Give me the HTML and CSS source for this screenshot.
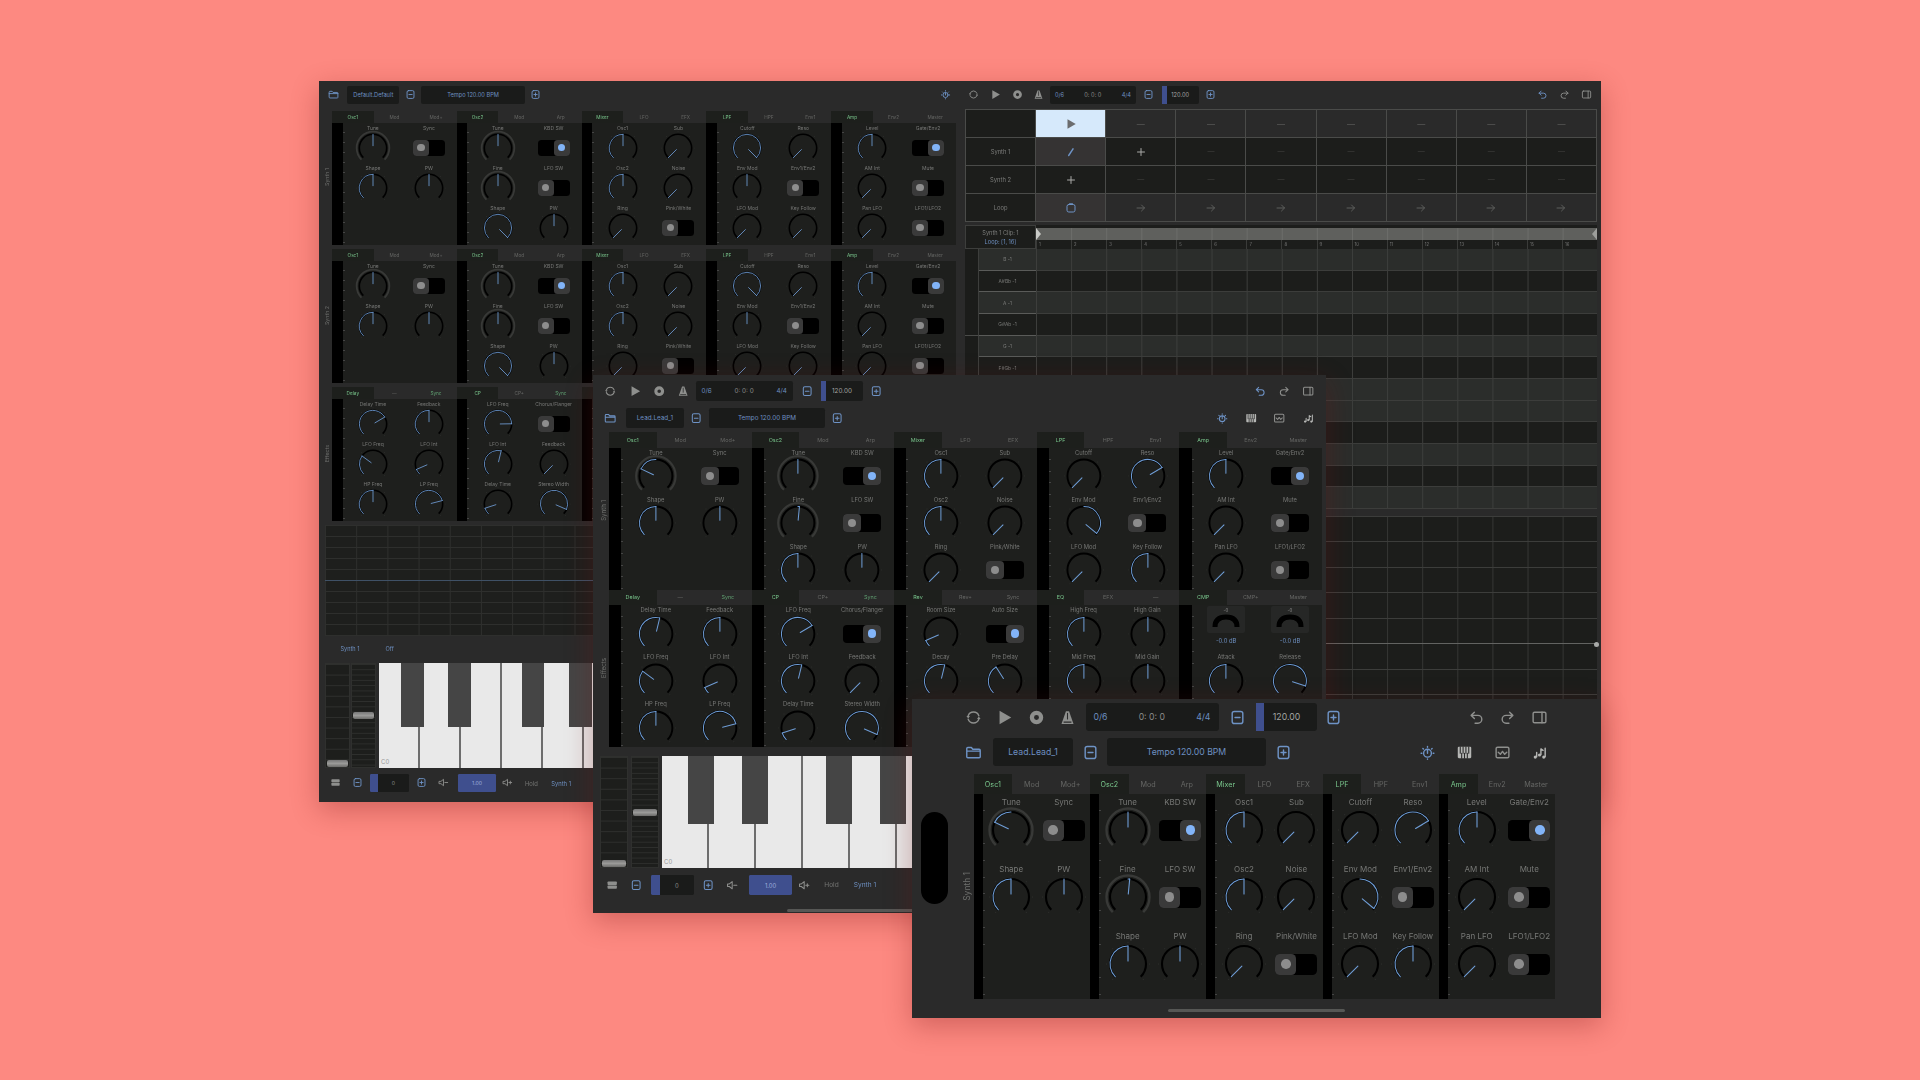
FILE: index.html
```html
<!DOCTYPE html>
<html lang="en">
<head>
<meta charset="utf-8">
<title>Synth windows</title>
<link rel="stylesheet" href="styles.css">
</head>
<body>
<svg class="defs" xmlns="http://www.w3.org/2000/svg">
  <symbol id="i-loop" viewBox="0 0 24 24"><path class="st" d="M4.500 9.500A8 8 0 0 1 19.500 9.500M19.500 14.500A8 8 0 0 1 4.500 14.500"/><path class="fl" d="M2 10h5l-2.500 3.500zM22 14h-5l2.500-3.500z"/></symbol>
  <symbol id="i-play" viewBox="0 0 24 24"><path class="fl" d="M5 2.500 21.500 12 5 21.500z"/></symbol>
  <symbol id="i-rec" viewBox="0 0 24 24"><path class="fl" fill-rule="evenodd" d="M12 2.500a9.500 9.500 0 1 1 0 19 9.500 9.500 0 0 1 0-19zm0 6a3.500 3.500 0 1 0 0 7 3.500 3.500 0 0 0 0-7z"/></symbol>
  <symbol id="i-metro" viewBox="0 0 24 24"><path class="fl" d="M9.800 3h4.400L20.500 21h-17z"/><path class="cut" d="M12 6v8M7 18.500h10"/></symbol>
  <symbol id="i-minus" viewBox="0 0 24 24"><rect class="st" x="4.500" y="3.500" width="15" height="17" rx="3"/><path class="st" d="M8.500 12h7"/></symbol>
  <symbol id="i-plus" viewBox="0 0 24 24"><rect class="st" x="4.500" y="3.500" width="15" height="17" rx="3"/><path class="st" d="M8.500 12h7M12 8.500v7"/></symbol>
  <symbol id="i-folder" viewBox="0 0 24 24"><path class="st" d="M2.500 6.500a1.500 1.500 0 0 1 1.500-1.500h5l2 2.500h9a1.500 1.500 0 0 1 1.500 1.500v9a1.500 1.500 0 0 1-1.500 1.500H4a1.500 1.500 0 0 1-1.500-1.500zM2.500 10h19"/></symbol>
  <symbol id="i-undo" viewBox="0 0 24 24"><path class="st" d="M9 4.500 4.500 9 9 13.500M4.500 9H14a5.500 5.500 0 0 1 0 11h-4"/></symbol>
  <symbol id="i-redo" viewBox="0 0 24 24"><path class="st" d="M15 4.500 19.500 9 15 13.500M19.500 9H10a5.500 5.500 0 0 0 0 11h4"/></symbol>
  <symbol id="i-panel" viewBox="0 0 24 24"><rect class="st" x="3" y="4.500" width="18" height="15" rx="2"/><path class="st" d="M15.500 4.500v15"/></symbol>
  <symbol id="i-synth" viewBox="0 0 24 24"><circle class="st" cx="12" cy="13" r="5.500"/><path class="st" d="M12 8v5M12 3.500v1M12 21v.500M3 13h1M20 13h1M5.500 6.500l.7.700M18.500 6.500l-.7.700"/></symbol>
  <symbol id="i-piano" viewBox="0 0 24 24"><rect class="fl" x="2.500" y="4" width="19" height="16" rx="1.500"/><path class="cut" d="M6 4v9M10 4v9M14 4v9M18 4v9M8 13v7M12 13v7M16 13v7"/></symbol>
  <symbol id="i-wave" viewBox="0 0 24 24"><rect class="st" x="3" y="4.500" width="18" height="15" rx="2"/><path class="st" d="m6 11.500 3 3 3-4 3 4 3-3"/></symbol>
  <symbol id="i-notes" viewBox="0 0 24 24"><path class="st" d="M8 18V12M14 15V7l3 2M20 18V6"/><circle class="fl" cx="6" cy="18.500" r="2.200"/><circle class="fl" cx="12" cy="15.500" r="2.200"/><circle class="fl" cx="18" cy="18.500" r="2.200"/></symbol>
  <symbol id="i-burger" viewBox="0 0 24 24"><rect class="fl" x="3" y="5" width="18" height="6.500" rx="1.500"/><rect class="fl" x="3" y="12.500" width="18" height="6.500" rx="1.500"/></symbol>
  <symbol id="i-voldn" viewBox="0 0 24 24"><path class="st" d="M3 9.500h3.500L12 5v14l-5.500-4.500H3zM15 12h6"/></symbol>
  <symbol id="i-volup" viewBox="0 0 24 24"><path class="st" d="M3 9.500h3.500L12 5v14l-5.500-4.500H3zM15 12h6M18 9v6"/></symbol>
  <symbol id="i-pencil" viewBox="0 0 24 24"><path class="fl" d="M15.500 4 18 5.500 8.500 20 6 20.500l.2-2.600z"/></symbol>
  <symbol id="i-add" viewBox="0 0 24 24"><path class="st" d="M12 5v14M5 12h14"/></symbol>
  <symbol id="i-arrow" viewBox="0 0 24 24"><path class="st" d="M4 12h15M13 6l6 6-6 6"/></symbol>
  <symbol id="i-clip" viewBox="0 0 24 24"><rect class="st" x="4" y="5" width="16" height="15" rx="3.500"/><path class="st" d="M9 3.500h6"/></symbol>
</svg>

<main class="win win-1" id="win1"></main>
<main class="win win-2" id="win2"></main>
<main class="win win-3" id="win3"></main>

<script src="script.js"></script>
</body>
</html>
```
FILE: styles.css
```css
* { box-sizing: border-box; }
html, body { margin: 0; height: 100%; }
body {
  background: #fd8981;
  font-family: Inter, "Liberation Sans", sans-serif;
  overflow: hidden;
  color: #7d7e7c;
}
.defs { width: 0; height: 0; display: block; overflow: hidden; }
.st { fill: none; stroke: currentColor; stroke-width: 2; stroke-linecap: round; stroke-linejoin: round; }
.fl { fill: currentColor; }
.cut { fill: none; stroke: #2a2a2a; stroke-width: 1.500; stroke-linecap: round; }

/* windows on the free canvas */
.win {
  position: absolute;
  background: #2a2a2a;
  overflow: hidden;
  display: flex;
  flex-direction: column;
  box-shadow: 0 8px 26px rgba(120, 20, 20, .32);
  font-size: var(--em);
}
.win-1 {
  left: 318.500px; top: 81px; width: 1282.500px; height: 721px;
  --em: 6.500px; --ic: 21.700px; --cw: 124.800px; --strip: 10.500px; --pitch: 40px; --panel: 122px;
  --tab: 12px; --lab: 10px; --ctl: 30px; --knob: 38px; --lab-f: 5px; --tab-f: 4.700px;
  --tg-w: 32px; --tg-h: 16px; --side: 13.500px; --key: 41px; --st: 25px; --tempo: 5.700em; --trans-gap: 0;
  filter: blur(.6px);
}
.win-2 {
  left: 593px; top: 375px; width: 733px; height: 538px;
  --em: 7.300px; --ic: 24.300px; --cw: 142.600px; --strip: 12.300px; --pitch: 47px; --panel: 142px;
  --tab: 15.500px; --lab: 10px; --ctl: 37px; --knob: 45.800px; --lab-f: 5.800px; --tab-f: 5.400px;
  --tg-w: 38px; --tg-h: 18px; --side: 16px; --key: 47px; --st: 28px; --tempo: 5.750em; --trans-gap: 0;
  filter: blur(.5px);
}
.win-3 {
  left: 911.500px; top: 699px; width: 689.500px; height: 319px;
  --em: 10px; --ic: 31.500px; --cw: 116.400px; --strip: 9px; --pitch: 67px; --panel: 205px;
  --tab: 20px; --lab: 16px; --ctl: 40px; --knob: 50px; --lab-f: 8px; --tab-f: 7.200px;
  --tg-w: 42px; --tg-h: 21px; --side: 62px; --key: 47px; --st: 28px; --tempo: 6.100em; --trans-gap: .200em;
  filter: blur(.35px);
}

/* toolbars */
.row { display: flex; align-items: center; flex: none; }
.win-1 .row-top { height: 27.500px; padding: 0 4px 0 4.500px; }
.win-2 .row-a { height: 32px; padding: 0 5.500px; }
.win-2 .row-b { height: 22px; padding: 0 5.500px; margin-bottom: 3px; }
.win-3 .row-a { height: 36px; padding: 0 46px; }
.win-3 .row-b { height: 34px; padding: 0 46px; margin-bottom: 5px; }
.grow { flex: 1; }
.left-group { display: flex; align-items: center; flex: 0 0 640px; padding-right: 7px; }
.btn { width: var(--ic); display: flex; align-items: center; justify-content: center; flex: none; color: #6e93c6; }
.btn-s { width: 3.400em; }
.btn-v { width: calc(var(--ic) * 1.180); }
.gray { color: #8e8f8d; }
.lite { color: #b6b7b5; }
.ico { width: 1.700em; height: 1.700em; display: block; flex: none; }
.views { display: flex; margin-right: calc(var(--ic) * -.09); }
.field {
  background: #1a1b1a;
  border-radius: .300em;
  height: 2.800em;
  display: flex;
  align-items: center;
  justify-content: center;
  font-size: 1em;
  flex: none;
  white-space: nowrap;
}
.field span { font-size: .870em; }
.blue { color: #6d8fc0; }
.trans { width: 13.300em; margin: 0 .300em 0 var(--trans-gap); justify-content: space-between; padding: 0 .800em 0 .800em; }
.trans .mid { color: #8b8c8a; }
.tempo { width: var(--tempo); border-left: .800em solid #3f4f8e; border-radius: 0 .300em .300em 0; margin: 0 .100em 0 .300em; padding-right: .800em; color: #a4a5a3; }
.preset { width: 8em; margin-left: .400em; }
.display { width: 15.900em; }

/* racks */
.rack { display: flex; flex: none; }
.side { width: var(--side); flex: none; display: flex; align-items: center; justify-content: flex-end; }
.side-label { writing-mode: vertical-rl; transform: rotate(180deg); font-size: calc(var(--lab-f) * 1.060); white-space: nowrap; color: #6f706e; margin-right: 2px; }
.pill { width: 27px; height: 92px; border-radius: 14px; background: #000; align-self: flex-start; margin: 38px auto 0 9px; }
.col { width: var(--cw); flex: none; }
.tabs { height: var(--tab); display: flex; }
.tab { flex: 1; display: flex; align-items: center; justify-content: center; font-size: var(--tab-f); color: #666765; }
.tab.on { background: #1d1f1c; color: #79c68c; }
.tab.green { color: #5f9e70; }
.panel { height: var(--panel); display: flex; background: #1e1f1d; }
.black { width: var(--strip); background: #000; flex: none; }
.ticks {
  width: 2px; flex: none; margin-right: -2px;
  background: repeating-linear-gradient(180deg, transparent 0, transparent calc(var(--pitch) / 4 - 1px), #444 calc(var(--pitch) / 4 - 1px), #444 calc(var(--pitch) / 4));
}
.cells { flex: 1; padding-left: 2.500px; display: grid; grid-template-columns: 1fr 1fr; grid-auto-rows: var(--pitch); align-content: start; }
.cell { display: flex; flex-direction: column; align-items: center; min-width: 0; }
.lab { height: var(--lab); line-height: var(--lab); font-size: var(--lab-f); color: #777876; white-space: nowrap; }
.ctl { height: var(--ctl); display: flex; align-items: center; justify-content: center; }
.knob { width: var(--knob); height: var(--knob); flex: none; display: block; }
.k-track { fill: none; stroke: #000; stroke-width: 2.100; stroke-linecap: butt; }
.k-ring { fill: none; stroke: #383937; stroke-width: 2.400; }
.k-val, .k-ptr { fill: none; stroke: #6f9dd6; stroke-width: 1.100; stroke-linecap: round; }
.k-dot { fill: #3f403e; }

.toggle { width: var(--tg-w); height: var(--tg-h); display: flex; background: #000; border-radius: calc(var(--tg-h) * .22); }
.toggle.is-on { justify-content: flex-end; }
.thumb { width: var(--tg-h); height: var(--tg-h); background: #3a3a3a; border-radius: calc(var(--tg-h) * .22); display: flex; align-items: center; justify-content: center; }
.thumb i { width: 46%; height: 46%; border-radius: 50%; background: #8d8d8d; display: block; }
.is-on .thumb i { background: #82b4f8; }

.comp-wrap { display: flex; flex-direction: column; align-items: center; }
.comp { width: 38px; height: 27px; background: #262726; border-radius: 2px; display: block; margin-top: 1px; }
.comp text { font-size: 4.500px; fill: #8a8a8a; font-family: Inter, sans-serif; }
.comp path { fill: none; stroke: #000; stroke-width: 5; }
.db { font-size: var(--lab-f); color: #6d8fc0; margin-top: 4px; }

/* window 1 body */
.w1-body { display: flex; flex: 1; min-height: 0; }
.w1-left { flex: 0 0 641.500px; min-width: 0; overflow: hidden; padding-top: 2px; display: flex; flex-direction: column; gap: 4px; }
.w1-right { flex: 0 0 632px; min-width: 0; margin-left: 5px; padding-top: .500px; display: flex; flex-direction: column; }
.graph {
  height: 111px; margin: .500px 0 0 6.500px; flex: none;
  background-color: #1e1f1d;
  background-image:
    linear-gradient(#3f5166, #3f5166),
    linear-gradient(#2e2f2d 1px, transparent 1px),
    linear-gradient(90deg, #2e2f2d 1px, transparent 1px);
  background-size: 100% 1px, 100% 11px, 31.200px 100%;
  background-position: 0 55px, 0 0, 0 0;
  background-repeat: no-repeat, repeat, repeat;
}
.track-bar { height: 25px; display: flex; align-items: center; margin-top: -4px; padding-left: 22px; gap: 26px; font-size: 5.600px; color: #6d8fc0; flex: none; }
.bottom { display: flex; flex-direction: column; flex: none; }
.kb-row { display: flex; flex: none; gap: 3px; }
.win-1 .bottom { margin-top: -2px; padding-left: 6.500px; }
.win-1 .kb-row { height: 105px; }
.win-1 .strip-b { margin-left: -2px; }
.win-2 .bottom { margin-top: 9px; padding-left: 7px; }
.win-2 .kb-row { height: 112px; }
.strip-v { width: var(--st); flex: none; background-color: #1d1e1c; border: 1px solid #2f302e; display: flex; flex-direction: column; }
.strip-a { justify-content: flex-end; background-image: linear-gradient(#2e2f2d 1px, transparent 1px); background-size: 100% 10.600px; }
.strip-b { justify-content: center; background-image: linear-gradient(#2e2f2d 1px, transparent 1px); background-size: 100% 5.300px; }
.handle { height: 7px; margin: 0 1px; background: linear-gradient(#777, #9a9a98 50%, #6c6c6a); border-radius: 2px; flex: none; }
.keys { display: flex; flex: none; }
.white { width: var(--key); flex: none; background: #e9e9e9; border-right: 2px solid #6d6d6d; position: relative; display: flex; align-items: flex-end; }
.white em { font-style: normal; font-size: 6px; color: #9a9a9a; padding: 0 0 3px 2px; }
.black-key { position: absolute; z-index: 1; top: 0; width: 58%; height: 61%; background: #454545; }
.b-c { left: 57%; } .b-d { left: 73%; } .b-f { left: 51%; } .b-g { left: 67%; } .b-a { left: 82%; }
.pad-bar { display: flex; align-items: center; flex: none; color: #6d8fc0; }
.win-1 .pad-bar { height: 30px; }
.win-2 .pad-bar { height: 34px; }
.num { width: 5.900em; height: 2.650em; margin: 0 .300em; background: #1a1b1a; border-left: 1.300em solid #3f4f8e; border-radius: .200em; display: flex; align-items: center; justify-content: center; color: #8b8c8a; flex: none; }
.num span, .vel span { font-size: .800em; }
.vel { width: 5.900em; height: 2.650em; margin-left: .600em; background: #3f4f8e; border-radius: .200em; display: flex; align-items: center; justify-content: center; color: #9fb0dd; flex: none; }
.hold { width: 4em; text-align: center; color: #757674; flex: none; font-size: .900em; margin-left: .300em; }
.pad-synth { width: 5em; text-align: center; font-size: .900em; flex: none; margin-left: .600em; }
.scrollbar { height: 3px; background: #565755; border-radius: 2px; margin: 0 auto; flex: none; }
.win-2 .scrollbar { width: 345px; margin-top: 7px; }
.win-3 .scrollbar { width: 177px; margin-top: 10px; }

/* clip grid */
.clips { display: grid; grid-template-columns: repeat(9, 1fr); grid-auto-rows: 27px; gap: 1px; padding: 1px; background: #4a4b49; flex: none; }
.clip { background: #1c1d1b; display: flex; align-items: center; justify-content: center; font-size: 5.800px; color: #7a7b79; }
.clip .ico { width: 12px; height: 12px; }
.clip.top { background: #2a2a2a; color: #5e5f5d; font-size: 8px; }
.clip.dim { color: #41423f; font-size: 7px; }
.clip.edit { background: #353333; color: #6e93c6; }
.clip.active { background: #d6e9fb; color: #6b6c6e; }
.clip.go { background: #2a2a2a; color: #5d5e5c; }
.clip.soft { color: #a9aaa8; }

/* piano roll */
.roll { margin-top: 3px; flex: none; }
.roll-head { display: flex; height: 24px; }
.clip-name { width: 71px; flex: none; background: #1c1d1b; display: flex; flex-direction: column; align-items: center; justify-content: center; gap: 3px; font-size: 5.600px; color: #7d7e7c; border: 1px solid #3d3e3c; }
.timeline { flex: 1; min-width: 0; display: flex; flex-direction: column; background: #1c1d1b; padding-top: 3px; }
.loopbar {
  height: 12px; flex: none; display: flex; justify-content: space-between; align-items: center;
  background-color: #5f605d;
  background-image: linear-gradient(90deg, #6c6d6a 1px, transparent 1px);
  background-size: 35.120px 100%;
}
.tri-l { width: 0; height: 0; border-left: 5px solid #c9cac7; border-top: 6px solid transparent; border-bottom: 6px solid transparent; }
.tri-r { width: 0; height: 0; border-right: 5px solid #9d9e9b; border-top: 6px solid transparent; border-bottom: 6px solid transparent; }
.ruler { flex: 1; display: grid; grid-template-columns: repeat(16, 1fr); border-bottom: 1px solid #555654; }
.ruler span { font-size: 4.200px; line-height: 9px; padding-left: 2px; color: #777; border-left: 1px solid #3a3b39; }
.rrow { display: flex; height: 21.670px; }
.sliver { width: 14px; flex: none; background-color: #1b1c1a; border-right: 1px solid #3d3e3c; }
.keylab { width: 57px; flex: none; display: flex; align-items: center; justify-content: center; font-size: 4.800px; color: #7a7b79; border-bottom: 1px solid #5a5b59; }
.rcells {
  flex: 1; border-bottom: 1px solid #3c3d3b;
  background-image: linear-gradient(90deg, #3d3e3c 1px, transparent 1px);
  background-size: 35.120px 100%;
}
.light .keylab, .light .rcells { background-color: #2b2d2b; }
.dark .keylab, .dark .rcells { background-color: #1c1d1b; }
.sl-a { border-bottom: 1px solid #4a4b49; }

/* automation lane */
.auto { margin-top: 7px; margin-left: 71px; flex: 1; position: relative; display: flex; flex-direction: column; background: #1c1d1b; border-top: 1px solid #3c3d3b; }
.auto div { height: 25.500px; flex: none; border-bottom: 1px solid #3c3d3b;
  background-image: linear-gradient(90deg, #353634 1px, transparent 1px);
  background-size: 35.120px 100%;
}
.auto div.mid-line { border-bottom-color: #626361; }
.auto b { position: absolute; right: -2px; top: 125px; width: 5px; height: 5px; border-radius: 50%; background: #a9aaa8; }
```
FILE: script.js
```js
const ic = (n, cls = '') => `<svg class="ico ${cls}"><use href="#i-${n}"/></svg>`;
const btn = (n, cls = '') => `<div class="btn ${cls}">${ic(n)}</div>`;

/* ---------- knobs ---------- */
const pt = (r, a) => {
  const t = a * Math.PI / 180;
  return `${(r * Math.sin(t)).toFixed(2)} ${(-r * Math.cos(t)).toFixed(2)}`;
};
const arc = (r, a, b) => `M${pt(r, a)}A${r} ${r} 0 ${b - a > 180 ? 1 : 0} 1 ${pt(r, b)}`;

function knob(v, flags = '') {
  const a = (v - .5) * 270;
  const bip = flags.includes('b');
  const ring = flags.includes('r');
  const from = bip ? Math.min(a, 0) : -135;
  const to = bip ? Math.max(a, 0) : a;
  let dots = '';
  if (!ring) for (let d = -135; d <= 135; d += 45) {
    const [x, y] = pt(21.5, d).split(' ');
    dots += `<circle class="k-dot" cx="${x}" cy="${y}" r=".45"/>`;
  }
  return `<svg class="knob" viewBox="-25 -25 50 50">
    ${ring ? `<path class="k-ring" d="${arc(21.5, -135, 135)}"/>` : dots}
    <path class="k-track" d="${arc(18, -135, 135)}"/>
    ${to - from > .5 ? `<path class="k-val" d="${arc(18, from, to)}"/>` : ''}
    <path class="k-ptr" d="M${pt(18, a)}L${pt(3, a)}"/>
  </svg>`;
}
const toggle = on => `<div class="toggle ${on ? 'is-on' : ''}"><div class="thumb"><i></i></div></div>`;
const comp = () => `<div class="cell comp-wrap"><svg class="comp" viewBox="0 0 38 27"><text x="19" y="6" text-anchor="middle">-0</text><path d="M8 21Q8 11 19 11Q30 11 30 21"/></svg><div class="db">-0.0 dB</div></div>`;

function cell(c) {
  if (c === 'comp') return comp();
  const [name, val, flags] = c;
  const body = typeof val === 'boolean' ? toggle(val) : knob(val, flags);
  return `<div class="cell"><div class="lab">${name}</div><div class="ctl">${body}</div></div>`;
}
function col([tabs, cells]) {
  const t = tabs.map((x, i) => {
    const green = x.startsWith('+');
    return `<div class="tab ${i === 0 ? 'on' : ''} ${green ? 'green' : ''}">${green ? x.slice(1) : x}</div>`;
  }).join('');
  return `<div class="col"><div class="tabs">${t}</div><div class="panel"><div class="black"></div><div class="ticks"></div><div class="cells">${cells.map(cell).join('')}</div></div></div>`;
}
const rack = (name, cols, pill = false) =>
  `<section class="rack"><div class="side">${pill ? '<div class="pill"></div>' : ''}<span class="side-label">${name}</span></div>${cols.map(col).join('')}</section>`;

/* ---------- rack data ---------- */
const synth = (late) => [
  [['Osc1', 'Mod', 'Mod+'], [['Tune', late ? .26 : .5, 'rb'], ['Sync', false], ['Shape', .5], ['PW', .5, 'b']]],
  [['Osc2', 'Mod', 'Arp'], [['Tune', .5, 'rb'], ['KBD SW', true], ['Fine', late ? .52 : .5, 'rb'], ['LFO SW', false], ['Shape', late ? .5 : 1], ['PW', .5, 'b']]],
  [['Mixer', 'LFO', 'EFX'], [['Osc1', .5], ['Sub', 0], ['Osc2', .5], ['Noise', 0], ['Ring', 0], ['Pink/White', false]]],
  [['LPF', 'HPF', 'Env1'], [['Cutoff', late ? 0 : 1], ['Reso', late ? .72 : 0], ['Env Mod', late ? .98 : .5, 'b'], ['Env1/Env2', false], ['LFO Mod', 0], ['Key Follow', late ? .5 : 0]]],
  [['Amp', 'Env2', 'Master'], [['Level', .5], ['Gate/Env2', true], ['AM Int', 0], ['Mute', false], ['Pan LFO', 0], ['LFO1/LFO2', false]]],
];
const effects = (late) => [
  [['Delay', '—', '+Sync'], [['Delay Time', late ? .55 : .72], ['Feedback', .5], ['LFO Freq', .3], ['LFO Int', .08], ['HP Freq', .5], ['LP Freq', .78]]],
  [['CP', 'CP+', '+Sync'], [['LFO Freq', late ? .72 : .83], ['Chorus/Flanger', !!late], ['LFO Int', .55], ['Feedback', 0], ['Delay Time', .1], ['Stereo Width', .92]]],
  [['Rev', 'Rev+', 'Sync'], [['Room Size', .08], ['Auto Size', true], ['Decay', .55], ['Pre Delay', .38]]],
  [['EQ', 'EFX', '—'], [['High Freq', .5], ['High Gain', .5, 'b'], ['Mid Freq', .5], ['Mid Gain', .5, 'b']]],
  [['CMP', 'CMP+', 'Master'], ['comp', 'comp', ['Attack', .5], ['Release', .9]]],
];
/* in the first window only the start of the third effect column shows from under the second window */
const effectsEarly = () => [...effects(false).slice(0, 2), [['', '', ''], []]];

/* ---------- toolbars ---------- */
const transport = () => `
  ${btn('loop', 'gray')}${btn('play', 'gray')}${btn('rec', 'gray')}${btn('metro', 'gray')}
  <div class="field trans"><span class="blue">0/6</span><span class="mid">0: 0: 0</span><span class="blue">4/4</span></div>
  ${btn('minus')}<div class="field tempo"><span>120.00</span></div>${btn('plus')}`;
const history = (blueUndo) => `${btn('undo', blueUndo ? '' : 'gray')}${btn('redo', 'gray')}${btn('panel', 'gray')}`;
const preset = (name) => `
  ${btn('folder')}
  <div class="field preset"><span class="blue">${name}</span></div>
  <div class="btn btn-s">${ic('minus')}</div>
  <div class="field display"><span class="blue">Tempo 120.00 BPM</span></div>
  <div class="btn btn-s">${ic('plus')}</div>`;
const views = () => `<div class="views">
  <div class="btn btn-v">${ic('synth')}</div>
  <div class="btn btn-v lite">${ic('piano')}</div>
  <div class="btn btn-v gray">${ic('wave')}</div>
  <div class="btn btn-v lite">${ic('notes')}</div></div>`;

/* ---------- keyboard ---------- */
function keyboard(n) {
  const blackOf = ['b-c', 'b-d', '', 'b-f', 'b-g', 'b-a', ''];
  let keys = '';
  for (let i = 0; i < n; i++) {
    const b = blackOf[i % 7];
    keys += `<div class="white">${b ? `<div class="black-key ${b}"></div>` : ''}${i === 0 ? '<em>C0</em>' : ''}</div>`;
  }
  return `<div class="kb-row">
    <div class="strip-v strip-a"><div class="handle"></div></div>
    <div class="strip-v strip-b"><div class="handle"></div></div>
    <div class="keys">${keys}</div></div>
  <div class="pad-bar">
    <div class="btn gray">${ic('burger')}</div>${btn('minus')}
    <div class="num"><span>0</span></div>${btn('plus')}
    ${btn('voldn', 'gray')}<div class="vel"><span>1.00</span></div>${btn('volup', 'gray')}
    <div class="hold">Hold</div><div class="pad-synth">Synth 1</div>
  </div>`;
}

/* ---------- clip launcher + roll ---------- */
function clips() {
  const cellOf = (cls, inner) => `<div class="clip ${cls}">${inner}</div>`;
  const rest = (cls, inner, n) => Array(n).fill(cellOf(cls, inner));
  return `<div class="clips">${[
    cellOf('', ''), cellOf('active', ic('play')), ...rest('top', '—', 7),
    cellOf('', 'Synth 1'), cellOf('edit', ic('pencil')), cellOf('soft', ic('add')), ...rest('dim', '—', 6),
    cellOf('', 'Synth 2'), cellOf('soft', ic('add')), ...rest('dim', '—', 7),
    cellOf('', 'Loop'), cellOf('edit', ic('clip')), ...rest('go', ic('arrow'), 7),
  ].join('')}</div>`;
}
function roll() {
  /* rows below F#Gb lie under the second window, so only the keys that show are named */
  const notes = ['B -1', 'A#Bb -1', 'A -1', 'G#Ab -1', 'G -1', 'F#Gb -1', 'F', 'E', 'D#', 'D', 'C#', 'C'];
  const rows = notes.map((n, i) =>
    `<div class="rrow ${n.includes('#') ? 'dark' : 'light'}"><div class="sliver ${i % 4 === 3 ? 'sl-a' : ''}"></div><div class="keylab">${i < 6 ? n : ''}</div><div class="rcells"></div></div>`).join('');
  const nums = Array.from({ length: 16 }, (_, i) => `<span>${i + 1}</span>`).join('');
  return `<div class="roll"><div class="roll-head">
    <div class="clip-name"><span>Synth 1 Clip: 1</span><span class="blue">Loop: [1, 16]</span></div>
    <div class="timeline"><div class="loopbar"><i class="tri-l"></i><i class="tri-r"></i></div><div class="ruler">${nums}</div></div>
  </div>${rows}</div>`;
}
function automation() {
  const lanes = Array.from({ length: 11 }, (_, i) => `<div class="${i === 4 ? 'mid-line' : ''}"></div>`).join('');
  return `<div class="auto">${lanes}<b></b></div>`;
}

/* ---------- windows ---------- */
document.getElementById('win1').innerHTML = `
  <header class="row row-top">
    <div class="left-group">${preset('Default.Default')}<div class="grow"></div><div class="btn">${ic('synth')}</div></div>
    <div class="row grow">${transport()}<div class="grow"></div>${history(true)}</div>
  </header>
  <div class="w1-body">
    <div class="w1-left">
      ${rack('Synth 1', synth(false))}
      ${rack('Synth 2', synth(false))}
      ${rack('Effects', effectsEarly())}
      <div class="graph"></div>
      <div class="track-bar"><span>Synth 1</span><span>Off</span></div>
      <div class="bottom">${keyboard(7)}</div>
    </div>
    <div class="w1-right">${clips()}${roll()}${automation()}</div>
  </div>`;

document.getElementById('win2').innerHTML = `
  <header class="row row-a">${transport()}<div class="grow"></div>${history(true)}</header>
  <header class="row row-b">${preset('Lead.Lead_1')}<div class="grow"></div>${views()}</header>
  ${rack('Synth 1', synth(true))}
  ${rack('Effects', effects(true))}
  <div class="bottom">${keyboard(6)}</div>
  <div class="scrollbar"></div>`;

document.getElementById('win3').innerHTML = `
  <header class="row row-a">${transport()}<div class="grow"></div>${history(false)}</header>
  <header class="row row-b">${preset('Lead.Lead_1')}<div class="grow"></div>${views()}</header>
  ${rack('Synth 1', synth(true), true)}
  <div class="scrollbar"></div>`;
```
